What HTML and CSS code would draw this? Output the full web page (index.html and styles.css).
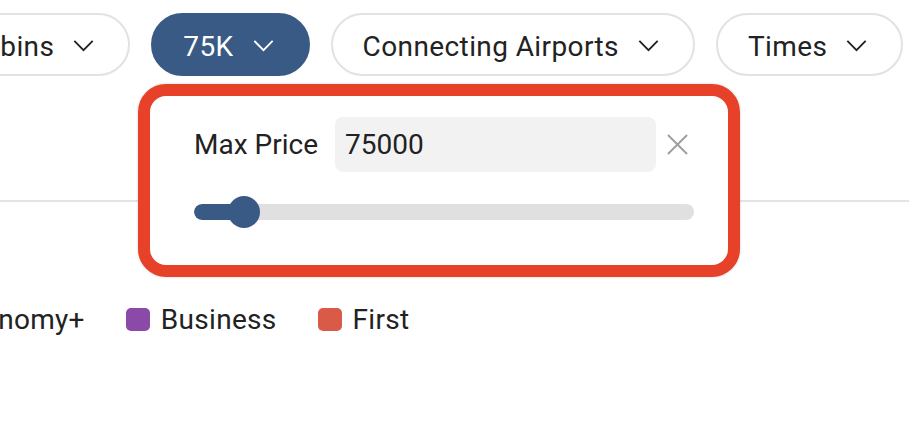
FILE: index.html
```html
<!DOCTYPE html>
<html lang="en">
<head>
<meta charset="utf-8">
<title>Filters</title>
<link rel="stylesheet" href="styles.css">
</head>
<body>
<div class="page">
  <div class="filters">
    <button class="pill">Cabins <svg class="chev" viewBox="0 0 22 12"><polyline points="1,1 11,11 21,1"/></svg></button>
    <button class="pill active">75K <svg class="chev" viewBox="0 0 22 12"><polyline points="1,1 11,11 21,1"/></svg></button>
    <button class="pill">Connecting Airports <svg class="chev" viewBox="0 0 22 12"><polyline points="1,1 11,11 21,1"/></svg></button>
    <button class="pill">Times <svg class="chev" viewBox="0 0 22 12"><polyline points="1,1 11,11 21,1"/></svg></button>
  </div>
  <div class="divider"></div>
  <div class="legend">
    <span class="item"><span class="swatch eco"></span>Economy+</span>
    <span class="item"><span class="swatch biz"></span>Business</span>
    <span class="item"><span class="swatch first"></span>First</span>
  </div>

  <div class="popup">
    <div class="price-row">
      <label class="price-label">Max Price</label>
      <div class="price-input">75000</div>
      <svg class="close" viewBox="0 0 22 22"><line x1="1" y1="1" x2="21" y2="21"/><line x1="21" y1="1" x2="1" y2="21"/></svg>
    </div>
    <div class="slider">
      <div class="track"><div class="fill" style="width:10%"></div></div>
      <div class="thumb" style="left:34px"></div>
    </div>
  </div>
</div>
</body>
</html>
```
FILE: styles.css
```css
* { box-sizing: border-box; }
html, body { margin: 0; padding: 0; background: #fff; }
body {
  font-family: Roboto, "Liberation Sans", sans-serif;
  color: #222;
  width: 909px;
  height: 426px;
  overflow: hidden;
}
.page { position: relative; width: 909px; height: 426px; overflow: hidden; }

.filters {
  display: flex;
  gap: 21px;
  padding-top: 13px;
  margin-left: -66px;
}
.pill {
  flex: none;
  display: flex;
  align-items: center;
  gap: 19px;
  height: 63px;
  padding: 3px 34px 0 30px;
  border: 2px solid #e2e2e2;
  border-radius: 32px;
  background: #fff;
  font-family: inherit;
  font-size: 28px;
  color: #222;
  letter-spacing: 0.4px;
}
.pill.active {
  background: #3a5a86;
  border-color: #3a5a86;
  color: #fff;
}
.chev { width: 21px; height: 11px; overflow: visible; margin-top: -2px; }
.chev polyline { fill: none; stroke: currentColor; stroke-width: 2; }

.divider {
  height: 2px;
  background: #e4e4e4;
  margin-top: 124px;
}

.legend {
  display: flex;
  gap: 41px;
  margin-top: 101px;
  margin-left: -84px;
  font-size: 28px;
  letter-spacing: 0.3px;
}
.item { display: flex; align-items: center; gap: 11px; }
.swatch { width: 24px; height: 23px; border-radius: 5px; display: block; }
.swatch.eco { background: #4aa0c9; }
.swatch.biz { background: #8b4aa8; }
.swatch.first { background: #d95a46; }

.popup {
  position: absolute;
  left: 138px;
  top: 84px;
  width: 602px;
  height: 193px;
  border: 12px solid #e8412a;
  border-radius: 28px;
  background: #fff;
  box-shadow: 0 0 3px rgba(0,0,0,0.18);
  padding: 21px 34px 0 44px;
}
.price-row {
  display: flex;
  align-items: center;
  gap: 17px;
}
.price-label { font-size: 28px; white-space: nowrap; }
.price-input {
  flex: 1;
  height: 55px;
  border-radius: 8px;
  background: #f2f2f2;
  font-size: 28px;
  padding: 0 10px;
  display: flex;
  align-items: center;
}
.close { width: 21px; height: 21px; margin: 0 6px 0 -6px; flex: none; }
.close line { stroke: #9e9e9e; stroke-width: 2; }

.slider {
  position: relative;
  height: 32px;
  margin-top: 24px;
  display: flex;
  align-items: center;
}
.track {
  width: 100%;
  height: 16px;
  border-radius: 8px;
  background: #e0e0e0;
  overflow: hidden;
}
.fill { height: 100%; background: #3a5a86; border-radius: 8px; }
.thumb {
  position: absolute;
  top: 0;
  width: 32px;
  height: 32px;
  border-radius: 50%;
  background: #3a5a86;
}
```
